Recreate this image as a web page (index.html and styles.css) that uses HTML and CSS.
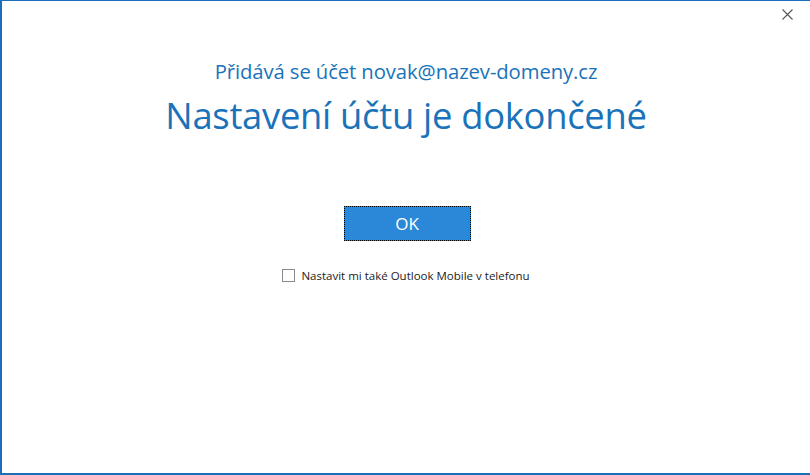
FILE: index.html
```html
<!DOCTYPE html>
<html lang="cs">
<head>
<meta charset="utf-8">
<link rel="stylesheet" href="styles.css">
</head>
<body>
<div class="window">
  <div class="titlebar">
    <button class="close" aria-label="Zavřít">
      <svg width="11" height="11" viewBox="0 0 11 11"><path d="M0.5 0.5 L10.5 10.5 M10.5 0.5 L0.5 10.5" stroke="#555" stroke-width="1.1" fill="none"/></svg>
    </button>
  </div>
  <div class="content">
    <p class="subtitle">Přidává se účet novak@nazev-domeny.cz</p>
    <h1 class="title">Nastavení účtu je dokončené</h1>
    <button class="ok">OK</button>
    <label class="check"><span class="box"></span><span class="label">Nastavit mi také Outlook Mobile v telefonu</span></label>
  </div>
</div>
</body>
</html>
```
FILE: styles.css
```css
html, body { margin: 0; padding: 0; }
body { width: 810px; height: 475px; background: #fff; font-family: "Open Sans", "Noto Sans", sans-serif; overflow: hidden; }
.window { box-sizing: border-box; width: 810px; height: 475px; border-left: 2px solid #1a6fb8; border-top: 1px solid #1a6fb8; border-bottom: 2px solid #1a6fb8; display: flex; flex-direction: column; background: #fff; }
.titlebar { height: 30px; display: flex; justify-content: flex-end; align-items: flex-start; }
.close { border: 0; background: transparent; padding: 0; margin: 8px 17px 0 0; width: 11px; height: 11px; display: flex; }
.content { display: flex; flex-direction: column; align-items: center; }
.subtitle { margin: 27px 0 0; font-size: 20.3px; color: #1a73ba; line-height: 26px; letter-spacing: -0.1px; }
.title { margin: 9px 0 0; font-size: 36.4px; font-weight: 400; color: #1a73ba; line-height: 44px; letter-spacing: -0.3px; }
.ok { margin-top: 69px; margin-left: 2px; width: 127px; height: 35px; background: #2b88d8; color: #fff; font-family: inherit; font-size: 17px; border: 1px dotted #000; outline: none; padding: 0; }
.check { margin-top: 27px; display: flex; align-items: center; gap: 6px; margin-left: 0; }
.box { width: 11px; height: 11px; border: 1px solid #8a8a8a; background: #fff; }
.label { font-size: 11.5px; color: #222; }
```
